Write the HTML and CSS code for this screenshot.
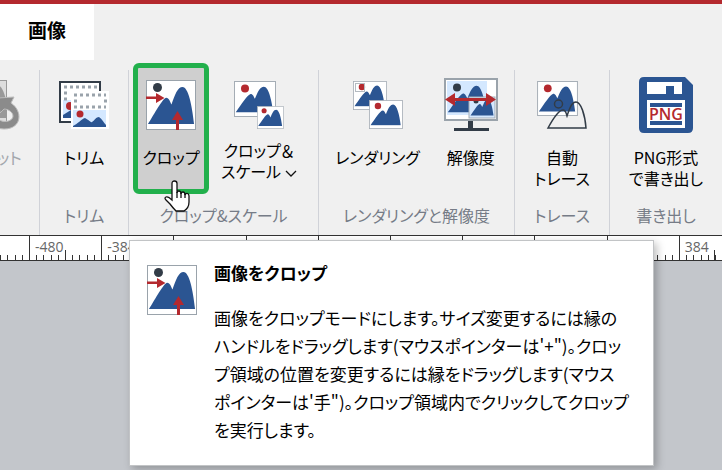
FILE: index.html
```html
<!DOCTYPE html>
<html lang="ja">
<head>
  <meta charset="UTF-8">
  <title>画像</title>
  <link rel="stylesheet" href="styles.css">
</head>
<body>

  <!-- shared shapes -->
  <svg class="defs" aria-hidden="true">
    <symbol id="hills" viewBox="0 0 50 40" preserveAspectRatio="none">
      <path d="M1 39 C8 28 16 13 20 12 C23 12 24 16 25.500 19 C29 9 32 1 37 1 C43 1 47 20 49 39Z"/>
    </symbol>
    <symbol id="picture" viewBox="0 0 42 36">
      <rect x="0.500" y="0.500" width="41" height="35" fill="#fff" stroke="#a5adb5"/>
      <use href="#hills" x="1" y="5" width="39" height="27" fill="#2b5592"/>
      <circle cx="11" cy="7.500" r="4" fill="#b4292e"/>
    </symbol>
    <symbol id="crop" viewBox="0 0 50 50">
      <rect x="0.500" y="0.500" width="49" height="49" fill="#fff" stroke="#9aa3ab"/>
      <use href="#hills" x="1" y="6" width="48" height="39" fill="#2b5592"/>
      <circle cx="11.500" cy="7.500" r="4.500" fill="#323c47"/>
      <path d="M0 16.500H10V13L18.500 18L10 23V19H0Z" fill="#b4292e"/>
      <path d="M30 50V40H26L31.500 31L37 40H33V50Z" fill="#b4292e"/>
    </symbol>
  </svg>

  <header class="tabs">
    <button class="tab">画像</button>
  </header>

  <main class="ribbon">
    <section class="group group-reset">
      <div class="tools">
        <button class="tool" disabled>
          <svg class="icon" width="54" height="50" viewBox="0 0 54 50">
            <rect x="0.500" y="0.500" width="38" height="42" fill="#ddd" stroke="#999"/>
            <path d="M4 38C14 18 24 6 29 5C34 5 37 15 39 24V38Z" fill="#999"/>
            <path d="M30 18L46 17L43 23C55 31 54 49 36 49C27 49 21 43 22 35H29C29 44 45 43 45 36C45 32 40 29 36 29L32 33Z" fill="#8b8b8b" stroke="#bbb"/>
          </svg>
          <span class="text">リセット</span>
        </button>
      </div>
    </section>

    <section class="group group-trim">
      <div class="tools">
        <button class="tool">
          <svg class="icon" width="50" height="50" viewBox="0 0 50 50">
            <rect x="1" y="2" width="40" height="40" fill="#fff" stroke="#323c47" stroke-width="2"/>
            <path d="M4 20H12V38H4Z" fill="#d4e8ff"/>
            <path d="M4 38V35L12 30V38Z" fill="#2b5592"/>
            <circle cx="11" cy="26" r="4" fill="#b4292e"/>
            <path d="M5 7H38M5 13H9M5 19H9" stroke="#9aa3ab" stroke-width="3" stroke-dasharray="3 3"/>
            <rect x="12" y="11" width="38" height="38" fill="#fff"/>
            <path d="M15 15H47M15 27H47M15 21H19M45 21H48" stroke="#9aa3ab" stroke-width="3" stroke-dasharray="3 3"/>
            <rect x="14" y="30" width="33" height="17" fill="#d4e8ff"/>
            <path d="M14 46C19 44 22 39 26 38C30 40 32 43 33 42C36 40 37 37 40 37C43 39 45 43 47 45V47H14Z" fill="#2b5592"/>
            <circle cx="21" cy="34" r="3.500" fill="#b4292e"/>
          </svg>
          <span class="text">トリム</span>
        </button>
      </div>
      <h3 class="caption">トリム</h3>
    </section>

    <section class="group group-crop">
      <div class="tools">
        <button class="tool active">
          <svg class="icon" width="50" height="50"><use href="#crop"/></svg>
          <span class="text">クロップ</span>
        </button>
        <button class="tool menu">
          <svg class="icon" width="50" height="50" viewBox="0 0 50 50">
            <use href="#picture" x="0" y="1" width="42" height="36"/>
            <use href="#picture" x="23" y="26" width="27" height="23"/>
          </svg>
          <span class="text">クロップ＆<br>スケール
            <svg width="12" height="8" viewBox="0 0 12 8"><path d="M1 1L6 6L11 1" fill="none" stroke="#111" stroke-width="1.300"/></svg>
          </span>
        </button>
      </div>
      <h3 class="caption">クロップ&amp;スケール</h3>
    </section>

    <section class="group group-render">
      <div class="tools">
        <button class="tool">
          <svg class="icon" width="50" height="50" viewBox="0 0 50 50">
            <use href="#picture" x="0" y="1" width="34" height="29"/>
            <rect x="2.500" y="3.500" width="9" height="8" fill="none" stroke="#b5bbc1"/>
            <use href="#picture" x="16" y="20" width="34" height="29"/>
          </svg>
          <span class="text">レンダリング</span>
        </button>
        <button class="tool">
          <svg class="icon" width="54" height="54" viewBox="0 0 54 54">
            <rect x="1" y="1" width="52" height="41" fill="#fff" stroke="#9aa3ab" stroke-width="2"/>
            <path d="M3 3H43V37H3Z" fill="#d4e8ff"/>
            <use href="#hills" x="3" y="7" width="40" height="28" fill="#2b5592"/>
            <circle cx="13" cy="9.500" r="4" fill="#323c47"/>
            <rect x="25" y="19" width="26" height="21" fill="#d4e8ff" stroke="#a5adb5"/>
            <use href="#hills" x="26" y="21" width="24" height="17" fill="#2b5592"/>
            <circle cx="32" cy="23" r="2.500" fill="#323c47"/>
            <path d="M1 21.500L11 15V20H42V15L52 21.500L42 28V23H11V28Z" fill="#b4292e"/>
            <path d="M24 43H29V50H45V53H10V50H24Z" fill="#323c47"/>
          </svg>
          <span class="text">解像度</span>
        </button>
      </div>
      <h3 class="caption">レンダリングと解像度</h3>
    </section>

    <section class="group group-trace">
      <div class="tools">
        <button class="tool">
          <svg class="icon" width="50" height="50" viewBox="0 0 50 50">
            <use href="#picture" x="0" y="1" width="41" height="35"/>
            <path d="M11 48C17 37 22 30 26 30C29 30 29 33 30 36C33 27 35 22 39 22C44 22 48 35 49 48Z" fill="none" stroke="#323c47" stroke-width="1.500"/>
            <circle cx="21.500" cy="24" r="4" fill="none" stroke="#323c47" stroke-width="1.500"/>
          </svg>
          <span class="text">自動<br>トレース</span>
        </button>
      </div>
      <h3 class="caption">トレース</h3>
    </section>

    <section class="group group-export">
      <div class="tools">
        <button class="tool">
          <svg class="icon" width="54" height="56" viewBox="0 0 54 56">
            <path d="M5 0H46L54 8V51Q54 56 49 56H5Q0 56 0 51V5Q0 0 5 0Z" fill="#2b5592"/>
            <path d="M8 5H43V17H35V9H27V17H8Z" fill="#fff"/>
            <path d="M8 23H46V51H8Z" fill="#fff"/>
            <path d="M11 26H43V30H11ZM11 44H43V48H11Z" fill="#2b5592"/>
            <text x="27" y="43" class="png">PNG</text>
          </svg>
          <span class="text">PNG形式<br>で書き出し</span>
        </button>
      </div>
      <h3 class="caption">書き出し</h3>
    </section>
  </main>

  <div class="ruler">
    <span class="mark mark-first"></span>
    <span class="mark">-480</span>
    <span class="mark">-384</span>
    <span class="mark"></span>
    <span class="mark"></span>
    <span class="mark"></span>
    <span class="mark"></span>
    <span class="mark"></span>
    <span class="mark"></span>
    <span class="mark"></span>
    <span class="mark">384</span>
  </div>

  <aside class="tooltip" role="tooltip">
    <svg class="tooltip-icon" width="50" height="50"><use href="#crop"/></svg>
    <div>
      <h2>画像をクロップ</h2>
      <p>画像をクロップモードにします。サイズ変更するには縁の<br>ハンドルをドラッグします(マウスポインターは'+")。クロッ<br>プ領域の位置を変更するには縁をドラッグします(マウス<br>ポインターは'手")。クロップ領域内でクリックしてクロップ<br>を実行します。</p>
    </div>
  </aside>

  <svg class="pointer" width="26" height="32" viewBox="0 0 26 32">
    <path d="M8 20V3.500Q8 1 10.500 1Q13 1 13 3.500V13Q13 11 15 11Q17 11 17 14Q17 12 19 12Q21 12 21 15Q22 13 23.500 13.500Q25 14 25 16V22Q25 28 20 31H12Q9 28 6 24L2 20Q0 18 2 17Q4 16 8 20Z" fill="#fff" stroke="#111" stroke-width="1.300"/>
    <path d="M13 12V18M17 13V18M21 14V18" stroke="#111" stroke-width="1.300"/>
  </svg>

</body>
</html>
```
FILE: styles.css
```css
* {
  box-sizing: border-box;
}
body {
  margin: 0;
  min-height: 100vh;
  position: relative;
  overflow: hidden;
  background: #c3c6cb;
  color: #000;
  font-family: "Noto Sans CJK JP", sans-serif;
  font-size: 16px;
  font-feature-settings: "palt";
}
h2, h3, p {
  margin: 0;
}
button {
  font: inherit;
  font-feature-settings: inherit;
  color: inherit;
  cursor: pointer;
}
.defs {
  position: absolute;
  width: 0;
  height: 0;
}

/* tabs */
.tabs {
  height: 60px;
  display: flex;
  border-top: 4px solid #b4292e;
  background: #f0f0f0;
}
.tab {
  width: 94px;
  padding: 0 0 5px;
  border: 0;
  background: #fff;
  font-size: 19px;
  font-weight: bold;
}

/* ribbon */
.ribbon {
  display: flex;
  height: 175px;
  padding-top: 10px;
  background: #f0f0f0;
}
.group {
  display: flex;
  flex-direction: column;
  flex-shrink: 0;
  border-right: 1px solid #d0d2d8;
}
.group-reset {
  width: 40px;
}
.group-trim {
  width: 89px;
}
.group-crop {
  width: 190px;
}
.group-render {
  width: 196px;
}
.group-trace {
  width: 95px;
}
.group-export {
  width: 112px;
  border-right: 0;
}
.tools {
  display: flex;
  justify-content: center;
  margin-top: -7px;
  height: 131px;
}
.group-reset .tools {
  justify-content: flex-end;
  padding-right: 8px;
}
.group-crop .tools {
  justify-content: flex-start;
  gap: 3px;
  padding-left: 4px;
}
.group-render .tools {
  gap: 6px;
}
.tool {
  display: flex;
  flex-direction: column;
  align-items: center;
  flex-shrink: 0;
  padding: 0 4px;
  border: 5px solid transparent;
  border-radius: 6px;
  background: none;
  white-space: nowrap;
}
.tool:disabled {
  color: #a3a7ad;
}
.tool.active {
  width: 76px;
  border-color: #22b04c;
  background: #cfcfcf;
}
.tool .icon {
  height: 56px;
  margin: 9px 0 3px;
  flex-shrink: 0;
}
.tool .text {
  line-height: 21px;
  padding-top: 11px;
}
.tool.menu .text {
  padding-top: 4px;
}
.caption {
  padding-top: 7px;
  line-height: 28px;
  font-size: 16px;
  font-weight: normal;
  color: #767c87;
  text-align: center;
}
.png {
  fill: #b4292e;
  font-family: "Open Sans", sans-serif;
  font-size: 16px;
  font-weight: 600;
  text-anchor: middle;
}

/* ruler */
.ruler {
  display: flex;
  height: 26px;
  border-top: 1px solid #333;
  border-bottom: 1px solid #333;
  background: #fff;
  overflow: hidden;
}
.mark {
  width: 10%;
  flex-shrink: 0;
  padding-left: 6px;
  font-family: "Open Sans", sans-serif;
  font-size: 14px;
  line-height: 21px;
  color: #666;
  background:
    linear-gradient(#333, #333) 0 0 / 1px 100% no-repeat,
    linear-gradient(#333, #333) 50% 100% / 1px 10px no-repeat,
    repeating-linear-gradient(to right, #333 0 1px, transparent 1px 10%) 0 100% / 100% 5px no-repeat;
}
.mark-first {
  margin-left: calc(29px - 10%);
}

/* tooltip */
.tooltip {
  position: absolute;
  top: 240px;
  left: 129px;
  width: 525px;
  display: flex;
  gap: 17px;
  padding: 19px 17px 21px;
  border: 1px solid #c2c4c6;
  background: #fff;
  box-shadow: 3px 3px 8px rgba(0,0,0,0.25);
}
.tooltip-icon {
  flex-shrink: 0;
  margin-top: 5px;
}
.tooltip h2 {
  font-size: 17px;
  line-height: 26px;
  margin-bottom: 18px;
}
.tooltip p {
  font-size: 17px;
  line-height: 28px;
  white-space: nowrap;
}
.pointer {
  position: absolute;
  top: 180px;
  left: 164px;
}
```
